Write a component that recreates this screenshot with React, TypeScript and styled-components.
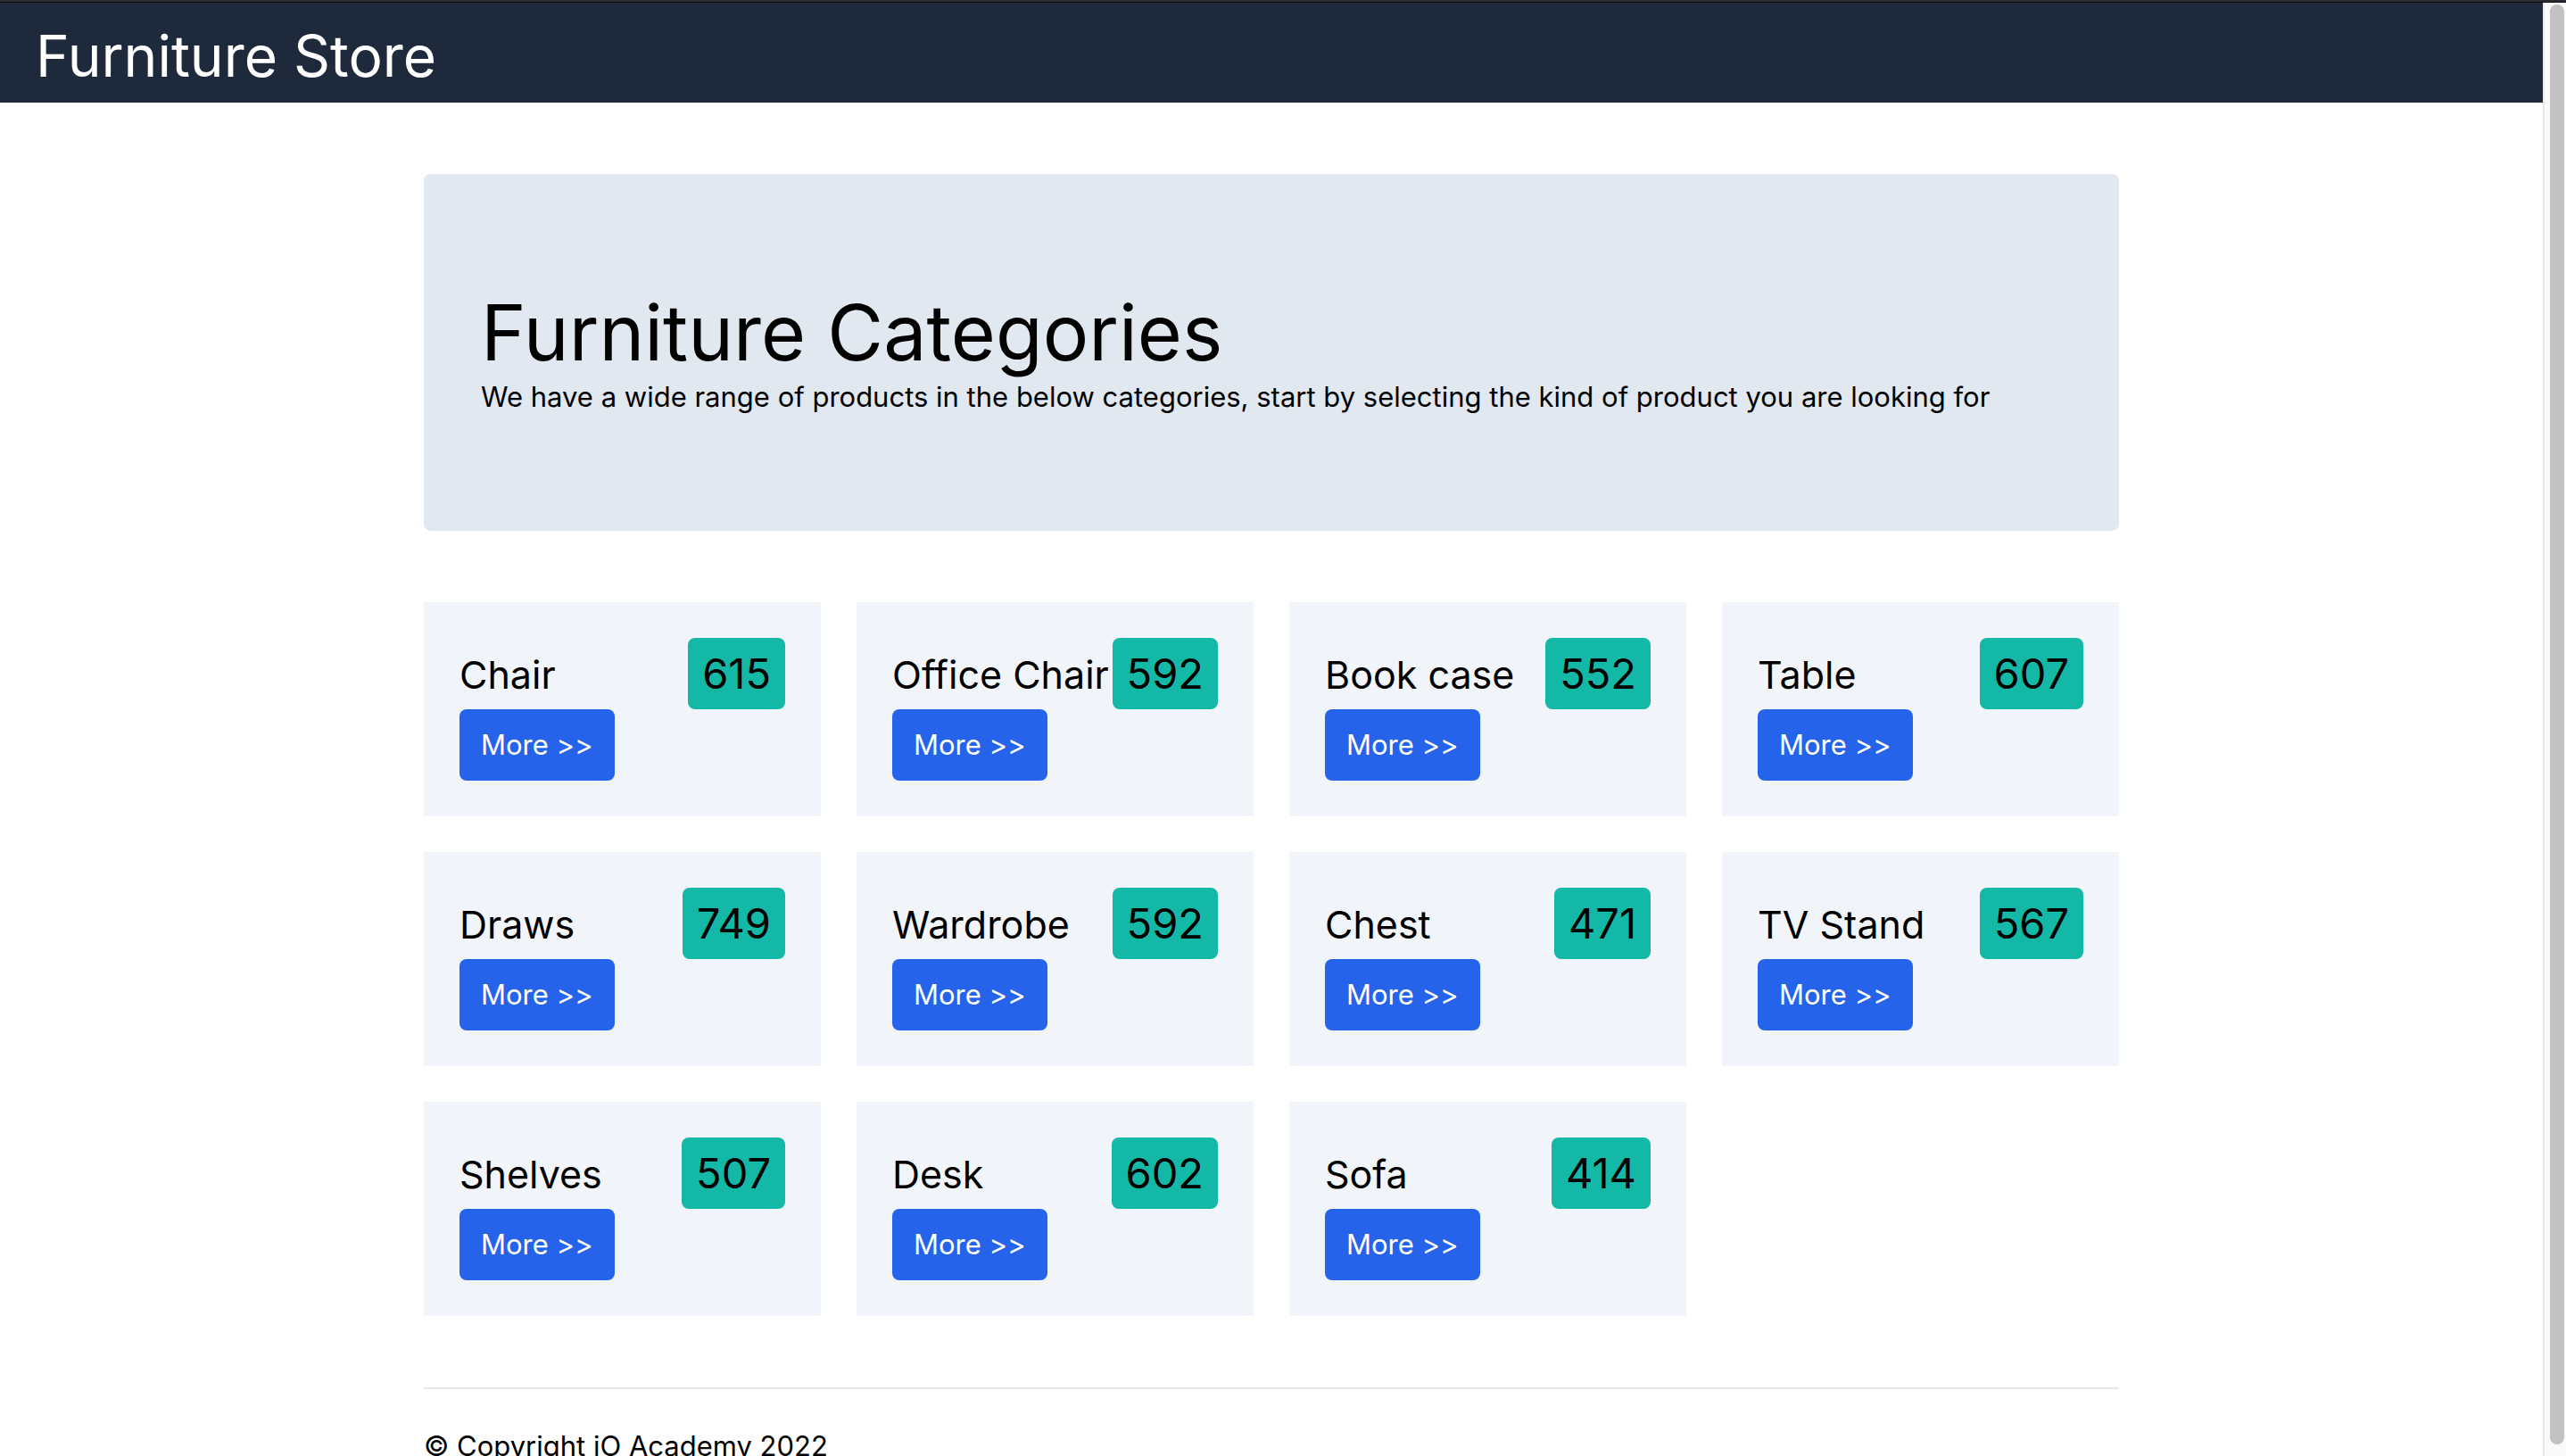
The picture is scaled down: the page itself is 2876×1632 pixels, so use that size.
import React from 'react';
import styled, { createGlobalStyle } from 'styled-components';

const GlobalStyle = createGlobalStyle`
  *, *::before, *::after {
    box-sizing: border-box;
  }
  body {
    margin: 0;
    background: #ffffff;
    color: #000000;
    font-family: Inter, "Liberation Sans", sans-serif;
    font-size: 31px;
    line-height: 48px;
  }
  h1, h2, h3, p {
    margin: 0;
    font-weight: 400;
  }
`;

const Window = styled.div`
  display: flex;
  flex-direction: column;
  height: 100vh;
  overflow: hidden;
`;

const TopEdge = styled.div`
  flex: none;
  height: 3px;
  background: #2c2a33;
  border-bottom: 1px solid #0b0a0d;
`;

const Viewport = styled.div`
  display: flex;
  flex: 1;
  min-height: 0;
`;

const Page = styled.div`
  flex: 1;
  min-width: 0;
  overflow-y: auto;
  scrollbar-width: none;
`;

const ScrollTrack = styled.div`
  display: flex;
  flex: none;
  width: 26px;
  padding: 2px 2px 13px 6px;
  background: #fafafa;
  border-left: 2px solid #e8e8e8;
`;

const ScrollThumb = styled.div`
  flex: 1;
  border-radius: 8px;
  background: #c2c2c2;
`;

const Header = styled.header`
  padding: 20px 40px 12px;
  background: #1e293b;
  color: #ffffff;
`;

const Brand = styled.h1`
  font-size: 64px;
  line-height: 80px;
`;

const Container = styled.main`
  width: calc(100% * 2 / 3);
  margin: 0 auto;
`;

const Hero = styled.section`
  margin: 80px 0;
  padding: 130px 64px 126px;
  border-radius: 8px;
  background: #e2e8f0;
`;

const HeroTitle = styled.h2`
  font-size: 86px;
  line-height: 96px;
`;

const Grid = styled.section`
  display: grid;
  grid-template-columns: repeat(4, minmax(0, 1fr));
  gap: 40px;
`;

const Card = styled.article`
  padding: 40px;
  background: #f1f5f9;
`;

const CardHead = styled.div`
  display: flex;
  align-items: baseline;
  justify-content: space-between;
`;

const CardTitle = styled.h3`
  min-width: 0;
  font-size: 43px;
  line-height: 64px;
  white-space: nowrap;
`;

const Count = styled.span`
  flex: none;
  padding: 8px 16px;
  border-radius: 8px;
  background: #14b8a6;
  font-size: 47px;
  line-height: 64px;
`;

const MoreButton = styled.button`
  display: block;
  padding: 16px 24px;
  border: 0;
  border-radius: 8px;
  background: #2563eb;
  color: #ffffff;
  font: inherit;
  cursor: pointer;
`;

const Footer = styled.footer`
  margin-top: 80px;
  padding: 40px 0;
  border-top: 2px solid #e5e7eb;
`;

const categories = [
  { name: 'Chair', count: 615 },
  { name: 'Office Chair', count: 592 },
  { name: 'Book case', count: 552 },
  { name: 'Table', count: 607 },
  { name: 'Draws', count: 749 },
  { name: 'Wardrobe', count: 592 },
  { name: 'Chest', count: 471 },
  { name: 'TV Stand', count: 567 },
  { name: 'Shelves', count: 507 },
  { name: 'Desk', count: 602 },
  { name: 'Sofa', count: 414 },
];

export default function App() {
  return (
    <Window>
      <GlobalStyle />
      <TopEdge />
      <Viewport>
        <Page>
          <Header>
            <Brand>Furniture Store</Brand>
          </Header>
          <Container>
            <Hero>
              <HeroTitle>Furniture Categories</HeroTitle>
              <p>
                We have a wide range of products in the below categories, start by selecting the
                kind of product you are looking for
              </p>
            </Hero>
            <Grid>
              {categories.map(({ name, count }) => (
                <Card key={name}>
                  <CardHead>
                    <CardTitle>{name}</CardTitle>
                    <Count>{count}</Count>
                  </CardHead>
                  <MoreButton type="button">More &gt;&gt;</MoreButton>
                </Card>
              ))}
            </Grid>
            <Footer>
              <p>© Copyright iO Academy 2022</p>
            </Footer>
          </Container>
        </Page>
        <ScrollTrack>
          <ScrollThumb />
        </ScrollTrack>
      </Viewport>
    </Window>
  );
}
